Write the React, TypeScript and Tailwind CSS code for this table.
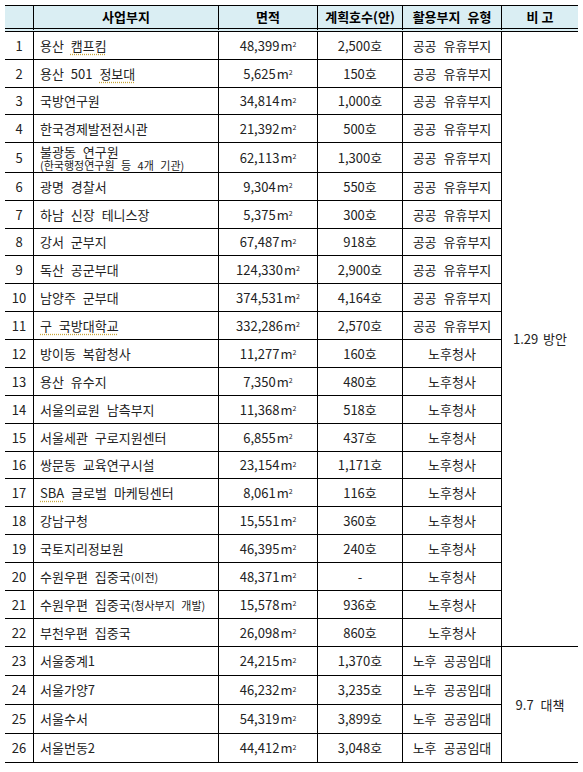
import type { ReactNode } from "react";

type Row = {
  no: number;
  name: ReactNode;
  area: string;
  units: string;
  kind: string;
  h: string;
};

const squiggle =
  "underline decoration-dotted decoration-[#c9a63a] underline-offset-[3px]";

function Small({ children }: { children: ReactNode }) {
  return <span className="text-[11px]">{children}</span>;
}

const rows: Row[] = [
  { no: 1, name: <>용산 <span className={squiggle}>캠프킴</span></>, area: "48,399", units: "2,500호", kind: "공공 유휴부지", h: "h-[28px]" },
  { no: 2, name: <>용산 501 <span className={squiggle}>정보대</span></>, area: "5,625", units: "150호", kind: "공공 유휴부지", h: "h-[28px]" },
  { no: 3, name: "국방연구원", area: "34,814", units: "1,000호", kind: "공공 유휴부지", h: "h-[27px]" },
  { no: 4, name: "한국경제발전전시관", area: "21,392", units: "500호", kind: "공공 유휴부지", h: "h-[28px]" },
  {
    no: 5,
    name: (
      <span className="flex flex-col">
        <span className="leading-[15px]">불광동 연구원</span>
        <span className="text-[11px] leading-[13px]">(한국행정연구원 등 4개 기관)</span>
      </span>
    ),
    area: "62,113",
    units: "1,300호",
    kind: "공공 유휴부지",
    h: "h-[30px]",
  },
  { no: 6, name: "광명 경찰서", area: "9,304", units: "550호", kind: "공공 유휴부지", h: "h-[28px]" },
  { no: 7, name: "하남 신장 테니스장", area: "5,375", units: "300호", kind: "공공 유휴부지", h: "h-[28px]" },
  { no: 8, name: "강서 군부지", area: "67,487", units: "918호", kind: "공공 유휴부지", h: "h-[27px]" },
  { no: 9, name: "독산 공군부대", area: "124,330", units: "2,900호", kind: "공공 유휴부지", h: "h-[28px]" },
  { no: 10, name: "남양주 군부대", area: "374,531", units: "4,164호", kind: "공공 유휴부지", h: "h-[28px]" },
  { no: 11, name: <span className={squiggle}>구 국방대학교</span>, area: "332,286", units: "2,570호", kind: "공공 유휴부지", h: "h-[28px]" },
  { no: 12, name: "방이동 복합청사", area: "11,277", units: "160호", kind: "노후청사", h: "h-[28px]" },
  { no: 13, name: "용산 유수지", area: "7,350", units: "480호", kind: "노후청사", h: "h-[28px]" },
  { no: 14, name: "서울의료원 남측부지", area: "11,368", units: "518호", kind: "노후청사", h: "h-[28px]" },
  { no: 15, name: "서울세관 구로지원센터", area: "6,855", units: "437호", kind: "노후청사", h: "h-[28px]" },
  { no: 16, name: "쌍문동 교육연구시설", area: "23,154", units: "1,171호", kind: "노후청사", h: "h-[27px]" },
  { no: 17, name: <><span className={squiggle}>SBA</span> 글로벌 마케팅센터</>, area: "8,061", units: "116호", kind: "노후청사", h: "h-[28px]" },
  { no: 18, name: "강남구청", area: "15,551", units: "360호", kind: "노후청사", h: "h-[28px]" },
  { no: 19, name: "국토지리정보원", area: "46,395", units: "240호", kind: "노후청사", h: "h-[28px]" },
  { no: 20, name: <>수원우편 집중국<Small>(이전)</Small></>, area: "48,371", units: "-", kind: "노후청사", h: "h-[28px]" },
  { no: 21, name: <>수원우편 집중국<Small>(청사부지 개발)</Small></>, area: "15,578", units: "936호", kind: "노후청사", h: "h-[28px]" },
  { no: 22, name: "부천우편 집중국", area: "26,098", units: "860호", kind: "노후청사", h: "h-[28px]" },
  { no: 23, name: "서울중계1", area: "24,215", units: "1,370호", kind: "노후 공공임대", h: "h-[29px]" },
  { no: 24, name: "서울가양7", area: "46,232", units: "3,235호", kind: "노후 공공임대", h: "h-[29px]" },
  { no: 25, name: "서울수서", area: "54,319", units: "3,899호", kind: "노후 공공임대", h: "h-[29px]" },
  { no: 26, name: "서울번동2", area: "44,412", units: "3,048호", kind: "노후 공공임대", h: "h-[29px]" },
];

const head =
  "h-[27px] flex items-center justify-center border-t border-b-4 border-double border-black bg-[#daeef3] font-bold text-black";
const cell = "flex items-center border-b border-r border-black";

export default function App() {
  return (
    <div className="bg-white min-h-[772px] pt-[5px] pl-[5px] font-['Noto_Sans_CJK_KR',sans-serif] text-[13px] text-[#222] [word-spacing:4px]">
      <div className="grid grid-cols-[29px_185px_99px_85px_99px_76px]">
        <div className={`${head} border-r`} />
        <div className={`${head} border-r`}>사업부지</div>
        <div className={`${head} border-r`}>면적</div>
        <div className={`${head} border-r [word-spacing:0px]`}>계획호수(안)</div>
        <div className={`${head} border-r`}>활용부지 유형</div>
        <div className={`${head} [word-spacing:0px]`}>비 고</div>

        {rows.map((r) => (
          <RowCells key={r.no} row={r} />
        ))}
      </div>
    </div>
  );
}

function RowCells({ row }: { row: Row }) {
  return (
    <>
      <div className={`${cell} ${row.h} justify-center`}>{row.no}</div>
      <div className={`${cell} ${row.h} pl-[6px] whitespace-nowrap`}>
        <span>{row.name}</span>
      </div>
      <div className={`${cell} ${row.h} justify-center [word-spacing:0px]`}>
        <span>
          {row.area}
          <span className="ml-[1px]">m</span>
          <sup className="text-[7px]">2</sup>
        </span>
      </div>
      <div className={`${cell} ${row.h} justify-center [word-spacing:0px]`}>{row.units}</div>
      <div className={`${cell} ${row.h} justify-center`}>{row.kind}</div>
      {row.no === 1 && (
        <div className="row-span-22 flex items-center justify-center border-b border-black [word-spacing:2px]">
          1.29 방안
        </div>
      )}
      {row.no === 23 && (
        <div className="row-span-4 flex items-center justify-center border-b border-black">
          9.7 대책
        </div>
      )}
    </>
  );
}
